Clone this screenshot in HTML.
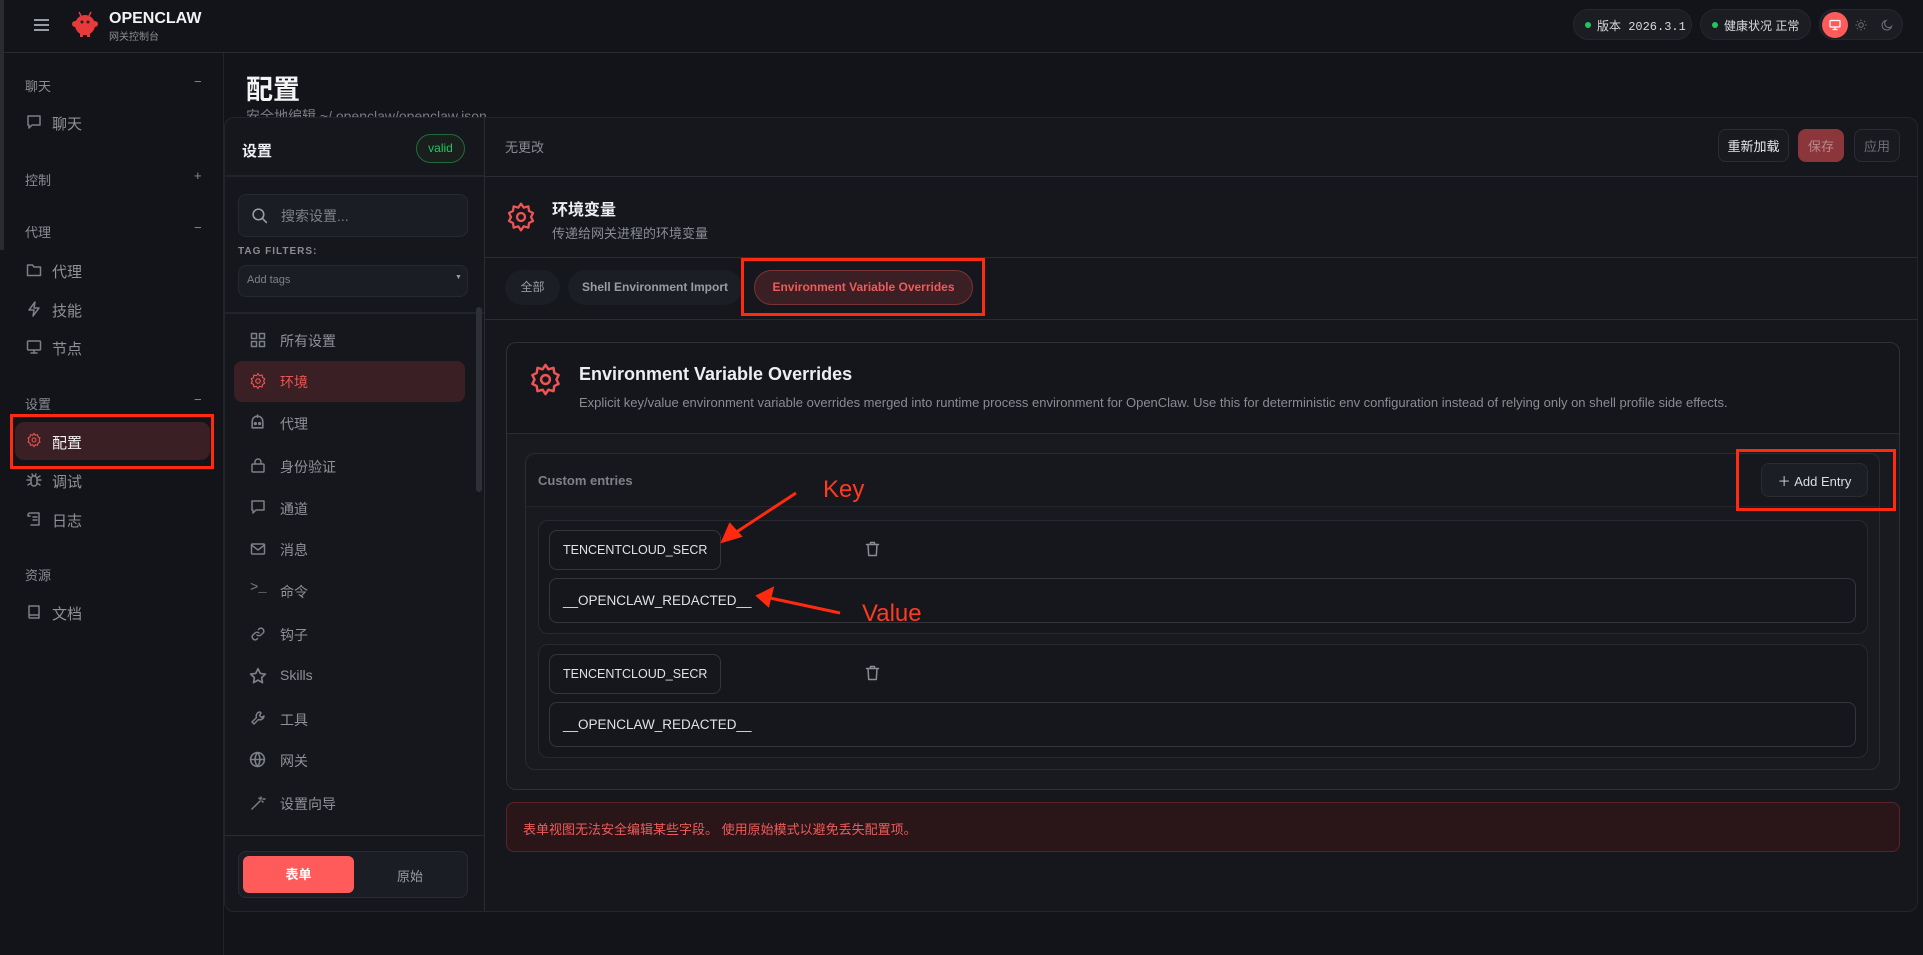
<!DOCTYPE html>
<html><head><meta charset="utf-8"><style>
*{box-sizing:border-box;margin:0;padding:0}
body{width:1923px;height:955px;overflow:hidden;background:#131419;font-family:"Liberation Sans","Noto Sans CJK SC",sans-serif;color:#d8d9de;position:relative}
.a{position:absolute}
.t{position:absolute;white-space:nowrap}
.sb{color:#8a8c94;font-size:13px}
.si{color:#8f9198;font-size:15px}
svg.ic{position:absolute;fill:none;stroke:#7d7f87;stroke-width:1.5;stroke-linecap:round;stroke-linejoin:round}
.pill{position:absolute;background:#1b1d23;border:1px solid #262830;border-radius:16px}
.btn{position:absolute;border:1px solid #2a2c34;border-radius:8px;background:#181a20;font-size:14px;display:flex;align-items:center;justify-content:center}
.inp{position:absolute;border:1px solid #34363e;border-radius:8px;background:#15171c;font-size:14px;color:#e0e1e5;padding-left:13px;display:flex;align-items:center}
.red{position:absolute;border:3px solid #ff2a10}
</style></head><body>
<div class="a" style="left:0;top:0;width:4px;height:250px;background:#2a2b30"></div>
<!-- top bar -->
<div class="a" style="left:0;top:52px;width:1923px;height:1px;background:#2a2b31"></div>
<div class="a" style="left:34px;top:19px;width:15px;height:2px;background:#9a9ca3;box-shadow:0 5px 0 #9a9ca3,0 10px 0 #9a9ca3"></div>
<svg class="a" style="left:70px;top:10px" width="30" height="28" viewBox="0 0 30 28"><circle cx="15" cy="15" r="10" fill="#e83a3a"/><circle cx="5" cy="14" r="3" fill="#e83a3a"/><circle cx="25" cy="14" r="3" fill="#e83a3a"/><rect x="10" y="23" width="3" height="4" fill="#e83a3a"/><rect x="17" y="23" width="3" height="4" fill="#e83a3a"/><line x1="11" y1="6" x2="9" y2="2" stroke="#e83a3a" stroke-width="1.5"/><line x1="19" y1="6" x2="21" y2="2" stroke="#e83a3a" stroke-width="1.5"/><circle cx="12" cy="12" r="1.5" fill="#222"/><circle cx="18" cy="12" r="1.5" fill="#222"/></svg>
<div class="t" style="left:109px;top:10px;font-size:16px;font-weight:bold;color:#f2f2f4">OPENCLAW</div>
<div class="t" style="left:109px;top:28px;font-size:10px;color:#8a8c93">网关控制台</div>
<div class="pill" style="left:1573px;top:9px;width:119px;height:31px"></div>
<div class="a" style="left:1585px;top:22px;width:6px;height:6px;border-radius:50%;background:#22c55e"></div>
<div class="t" style="left:1597px;top:17px;font-size:12px;color:#d8d9de;font-family:'Liberation Mono','Noto Sans CJK SC',monospace">版本 2026.3.1</div>
<div class="pill" style="left:1700px;top:9px;width:111px;height:31px"></div>
<div class="a" style="left:1712px;top:22px;width:6px;height:6px;border-radius:50%;background:#22c55e"></div>
<div class="t" style="left:1724px;top:17px;font-size:12px;color:#d8d9de">健康状况 正常</div>
<div class="pill" style="left:1819px;top:9px;width:84px;height:31px"></div>
<div class="a" style="left:1822px;top:12px;width:26px;height:26px;border-radius:50%;background:#ff5b5b"></div>
<svg class="a" style="left:1829px;top:19px" width="12" height="12" viewBox="0 0 12 12" fill="none" stroke="#fff" stroke-width="1.3"><rect x="1" y="1.5" width="10" height="6.5" rx="1"/><line x1="6" y1="8" x2="6" y2="10.5"/><line x1="3.5" y1="10.5" x2="8.5" y2="10.5"/></svg>
<svg class="a" style="left:1855px;top:19px" width="12" height="12" viewBox="0 0 12 12" fill="none" stroke="#6e7078" stroke-width="1"><circle cx="6" cy="6" r="2.3"/><path d="M6 .5v1.5M6 10v1.5M.5 6H2M10 6h1.5M2 2l1 1M9 9l1 1M2 10l1-1M9 3l1-1"/></svg>
<svg class="a" style="left:1881px;top:19px" width="12" height="12" viewBox="0 0 12 12" fill="none" stroke="#6e7078" stroke-width="1.1"><path d="M10.5 7.5A4.8 4.8 0 1 1 5 1.5a3.8 3.8 0 0 0 5.5 6z"/></svg>

<!-- left sidebar -->
<div class="a" style="left:223px;top:53px;width:1px;height:902px;background:#22242a"></div>
<div class="t sb" style="left:25px;top:76px">聊天</div><div class="t sb" style="left:194px;top:74px">−</div>
<svg class="ic" style="left:26px;top:114px" width="16" height="16" viewBox="0 0 16 16"><path d="M2 2h12v9H6l-3 3v-3H2z"/></svg>
<div class="t si" style="left:52px;top:113px">聊天</div>
<div class="t sb" style="left:25px;top:170px">控制</div><div class="t sb" style="left:194px;top:168px">+</div>
<div class="t sb" style="left:25px;top:222px">代理</div><div class="t sb" style="left:194px;top:220px">−</div>
<svg class="ic" style="left:26px;top:262px" width="16" height="16" viewBox="0 0 16 16"><path d="M1.5 3h5l1.5 2h6.5v8.5h-13z"/></svg>
<div class="t si" style="left:52px;top:261px">代理</div>
<svg class="ic" style="left:26px;top:301px" width="16" height="16" viewBox="0 0 16 16"><path d="M9 1L3 9h5l-1 6 6-8H8z"/></svg>
<div class="t si" style="left:52px;top:300px">技能</div>
<svg class="ic" style="left:26px;top:339px" width="16" height="16" viewBox="0 0 16 16"><rect x="1.5" y="2" width="13" height="9" rx="1"/><path d="M8 11v3M5 14h6"/></svg>
<div class="t si" style="left:52px;top:338px">节点</div>
<div class="t sb" style="left:25px;top:394px">设置</div><div class="t sb" style="left:194px;top:392px">−</div>
<div class="a" style="left:15px;top:422px;width:195px;height:38px;border-radius:9px;background:#3a1f24"></div>
<svg class="ic" style="left:26px;top:432px;stroke:#f05454" width="16" height="16" viewBox="0 0 24 24"><circle cx="12" cy="12" r="3"/><path d="M12 2l2 3 3.5-1 .5 3.5 3 1.5-1.5 3 1.5 3-3 1.5-.5 3.5-3.5-1-2 3-2-3-3.5 1-.5-3.5-3-1.5 1.5-3-1.5-3 3-1.5.5-3.5 3.5 1z"/></svg>
<div class="t" style="left:52px;top:432px;font-size:15px;color:#f0f0f2">配置</div>
<div class="red" style="left:10px;top:414px;width:204px;height:55px"></div>
<svg class="ic" style="left:26px;top:472px" width="16" height="16" viewBox="0 0 16 16"><rect x="5" y="4" width="6" height="10" rx="3"/><path d="M6 2l1 2M10 2l-1 2M1 8h4M11 8h4M2 4l3 2M14 4l-3 2M2 13l3-2M14 13l-3-2"/></svg>
<div class="t si" style="left:52px;top:471px">调试</div>
<svg class="ic" style="left:26px;top:511px" width="16" height="16" viewBox="0 0 16 16"><path d="M4 2h9v12H5M4 2a2 2 0 0 0-2 2v1h2M7 6h4M7 9h4"/></svg>
<div class="t si" style="left:52px;top:510px">日志</div>
<div class="t sb" style="left:25px;top:565px">资源</div>
<svg class="ic" style="left:26px;top:604px" width="16" height="16" viewBox="0 0 16 16"><path d="M3 2h10v12H4a1 1 0 0 1-1-1zM3 11h10"/></svg>
<div class="t si" style="left:52px;top:603px">文档</div>

<!-- main title -->
<div class="t" style="left:246px;top:68px;font-size:27px;font-weight:bold;color:#f4f4f6">配置</div>
<div class="t" style="left:246px;top:106px;font-size:14px;color:#7b7d85">安全地编辑 ~/.openclaw/openclaw.json</div>

<!-- settings panel -->
<div class="a" style="left:224px;top:117px;width:261px;height:795px;background:#15171d;border:1px solid #23252c;border-radius:10px 0 0 10px"></div>
<div class="t" style="left:242px;top:140px;font-size:15px;font-weight:bold;color:#eeeef1">设置</div>
<div class="a" style="left:416px;top:134px;width:49px;height:29px;border:1px solid #1f6b3a;border-radius:15px;background:#1a1f1d;color:#22c55e;font-size:12px;text-align:center;line-height:27px">valid</div>
<div class="a" style="left:225px;top:175px;width:259px;height:2px;background:#22242b"></div>
<div class="a" style="left:238px;top:194px;width:230px;height:43px;background:#1b1d24;border:1px solid #272930;border-radius:8px"></div>
<svg class="ic" style="left:251px;top:207px;stroke:#9a9ca3" width="17" height="17" viewBox="0 0 16 16"><circle cx="7" cy="7" r="5"/><path d="M11 11l3.5 3.5"/></svg>
<div class="t" style="left:281px;top:206px;font-size:14px;color:#7f8189">搜索设置...</div>
<div class="t" style="left:238px;top:246px;font-size:10px;font-weight:bold;letter-spacing:1px;color:#8a8c94">TAG FILTERS:</div>
<div class="a" style="left:238px;top:265px;width:230px;height:32px;background:#1b1d24;border:1px solid #272930;border-radius:8px"></div>
<div class="t" style="left:247px;top:274px;font-size:11px;color:#7f8189">Add tags</div>
<div class="t" style="left:455px;top:274px;font-size:7px;color:#9a9ca3">▼</div>
<div class="a" style="left:225px;top:312px;width:259px;height:2px;background:#22242b"></div>
<div class="a" style="left:476px;top:307px;width:6px;height:185px;border-radius:3px;background:#2e3037"></div>
<div class="a" style="left:234px;top:361px;width:231px;height:41px;border-radius:8px;background:#3a1f24"></div>
<svg class="ic" style="left:250px;top:332px" width="16" height="16" viewBox="0 0 16 16"><rect x="1.5" y="1.5" width="5" height="5"/><rect x="9.5" y="1.5" width="5" height="5"/><rect x="1.5" y="9.5" width="5" height="5"/><rect x="9.5" y="9.5" width="5" height="5"/></svg>
<div class="t si" style="left:280px;top:331px;font-size:14px">所有设置</div>
<svg class="ic" style="left:249px;top:372px;stroke:#f05454" width="18" height="18" viewBox="0 0 24 24"><circle cx="12" cy="12" r="3"/><path d="M12 2l2 3 3.5-1 .5 3.5 3 1.5-1.5 3 1.5 3-3 1.5-.5 3.5-3.5-1-2 3-2-3-3.5 1-.5-3.5-3-1.5 1.5-3-1.5-3 3-1.5.5-3.5 3.5 1z"/></svg>
<div class="t" style="left:280px;top:372px;font-size:14px;color:#f05454">环境</div>
<svg class="ic" style="left:249px;top:414px" width="17" height="17" viewBox="0 0 16 16"><path d="M8 1v2M3 7a5 5 0 0 1 10 0v6H3z"/><circle cx="6" cy="9" r=".8"/><circle cx="10" cy="9" r=".8"/></svg>
<div class="t si" style="left:280px;top:414px;font-size:14px">代理</div>
<svg class="ic" style="left:250px;top:457px" width="16" height="16" viewBox="0 0 16 16"><rect x="2" y="7" width="12" height="8" rx="1"/><path d="M5 7V5a3 3 0 0 1 6 0v2"/></svg>
<div class="t si" style="left:280px;top:457px;font-size:14px">身份验证</div>
<svg class="ic" style="left:250px;top:499px" width="16" height="16" viewBox="0 0 16 16"><path d="M2 2h12v9H6l-3 3v-3H2z"/></svg>
<div class="t si" style="left:280px;top:499px;font-size:14px">通道</div>
<svg class="ic" style="left:250px;top:541px" width="16" height="16" viewBox="0 0 16 16"><rect x="1.5" y="3" width="13" height="10" rx="1"/><path d="M1.5 4l6.5 5 6.5-5"/></svg>
<div class="t si" style="left:280px;top:540px;font-size:14px">消息</div>
<div class="t" style="left:250px;top:580px;font-size:14px;color:#7d7f87;font-family:'Liberation Mono',monospace">&gt;_</div>
<div class="t si" style="left:280px;top:582px;font-size:14px">命令</div>
<svg class="ic" style="left:250px;top:626px" width="16" height="16" viewBox="0 0 16 16"><path d="M7 9a3 3 0 0 0 4 0l2.5-2.5a3 3 0 0 0-4-4L8.5 3.5M9 7a3 3 0 0 0-4 0L2.5 9.5a3 3 0 0 0 4 4l1-1"/></svg>
<div class="t si" style="left:280px;top:625px;font-size:14px">钩子</div>
<svg class="ic" style="left:249px;top:667px" width="18" height="18" viewBox="0 0 16 16"><path d="M8 1.5l2 4.2 4.5.6-3.3 3.1.8 4.5L8 11.7 4 13.9l.8-4.5L1.5 6.3 6 5.7z"/></svg>
<div class="t si" style="left:280px;top:667px;font-size:14px">Skills</div>
<svg class="ic" style="left:250px;top:710px" width="16" height="16" viewBox="0 0 16 16"><path d="M10 2a4 4 0 0 0-3.5 5.5L2 12l2 2 4.5-4.5A4 4 0 0 0 14 6l-2.5 1.5-2-2L11 3z"/></svg>
<div class="t si" style="left:280px;top:710px;font-size:14px">工具</div>
<svg class="ic" style="left:249px;top:751px" width="17" height="17" viewBox="0 0 16 16"><circle cx="8" cy="8" r="6.5"/><path d="M1.5 8h13M8 1.5c-3 3.5-3 9.5 0 13M8 1.5c3 3.5 3 9.5 0 13"/></svg>
<div class="t si" style="left:280px;top:751px;font-size:14px">网关</div>
<svg class="ic" style="left:250px;top:795px" width="16" height="16" viewBox="0 0 16 16"><path d="M2 14l8-8M11 2v2M13 4h2M12 6l1 1M9 3l1 1"/></svg>
<div class="t si" style="left:280px;top:794px;font-size:14px">设置向导</div>
<div class="a" style="left:225px;top:835px;width:259px;height:1px;background:#2a2c33"></div>
<div class="a" style="left:238px;top:851px;width:230px;height:47px;border:1px solid #292b32;border-radius:8px;background:#1b1d24"></div>
<div class="a" style="left:243px;top:856px;width:111px;height:37px;border-radius:6px;background:#ff5b5b;color:#fff;font-size:13px;font-weight:bold;text-align:center;line-height:37px">表单</div>
<div class="t" style="left:397px;top:866px;font-size:13px;color:#9a9ca3">原始</div>

<!-- main panel -->
<div class="a" style="left:484px;top:117px;width:1434px;height:795px;background:#15171d;border:1px solid #23252c;border-left:1px solid #2a2c33;border-radius:0 10px 10px 0"></div>
<div class="t" style="left:505px;top:137px;font-size:13px;color:#8a8c94">无更改</div>
<div class="btn" style="left:1718px;top:129px;width:71px;height:33px;color:#e8e8eb;font-size:13px">重新加载</div>
<div class="btn" style="left:1798px;top:129px;width:46px;height:33px;background:#8b363b;border-color:#8b363b;color:#b98a8d;font-size:13px">保存</div>
<div class="btn" style="left:1854px;top:129px;width:46px;height:33px;color:#6e7078;font-size:13px">应用</div>
<div class="a" style="left:485px;top:176px;width:1432px;height:1px;background:#2a2c33"></div>
<svg class="ic" style="left:505px;top:201px;stroke:#f05454;stroke-width:1.7" width="32" height="32" viewBox="0 0 24 24"><circle cx="12" cy="12" r="3"/><path d="M12 2l2 3 3.5-1 .5 3.5 3 1.5-1.5 3 1.5 3-3 1.5-.5 3.5-3.5-1-2 3-2-3-3.5 1-.5-3.5-3-1.5 1.5-3-1.5-3 3-1.5.5-3.5 3.5 1z"/></svg>
<div class="t" style="left:552px;top:196px;font-size:16px;font-weight:bold;color:#eeeef1">环境变量</div>
<div class="t" style="left:552px;top:223px;font-size:13px;color:#8a8c94">传递给网关进程的环境变量</div>
<div class="a" style="left:485px;top:257px;width:1432px;height:1px;background:#2a2c33"></div>
<div class="a" style="left:505px;top:270px;width:55px;height:35px;border-radius:18px;background:#1c1e25;color:#9a9ca3;font-size:12px;text-align:center;line-height:35px">全部</div>
<div class="a" style="left:568px;top:270px;width:174px;height:35px;border-radius:18px;background:#1c1e25;color:#9a9ca3;font-size:12px;font-weight:bold;text-align:center;line-height:35px">Shell Environment Import</div>
<div class="a" style="left:754px;top:270px;width:219px;height:35px;border-radius:18px;background:#3a1f24;border:1px solid #7a3338;color:#f05a5a;font-size:12px;font-weight:bold;text-align:center;line-height:33px">Environment Variable Overrides</div>
<div class="red" style="left:741px;top:258px;width:244px;height:58px"></div>
<div class="a" style="left:485px;top:319px;width:1432px;height:1px;background:#2a2c33"></div>

<div class="a" style="left:506px;top:342px;width:1394px;height:448px;border:1px solid #2e3038;border-radius:10px;background:#14161b"></div>
<svg class="ic" style="left:528px;top:362px;stroke:#f05454;stroke-width:1.7" width="35" height="35" viewBox="0 0 24 24"><circle cx="12" cy="12" r="3"/><path d="M12 2l2 3 3.5-1 .5 3.5 3 1.5-1.5 3 1.5 3-3 1.5-.5 3.5-3.5-1-2 3-2-3-3.5 1-.5-3.5-3-1.5 1.5-3-1.5-3 3-1.5.5-3.5 3.5 1z"/></svg>
<div class="t" style="left:579px;top:364px;font-size:18px;font-weight:bold;color:#eeeef1">Environment Variable Overrides</div>
<div class="t" style="left:579px;top:395px;font-size:13px;color:#8a8c94">Explicit key/value environment variable overrides merged into runtime process environment for OpenClaw. Use this for deterministic env configuration instead of relying only on shell profile side effects.</div>
<div class="a" style="left:507px;top:433px;width:1392px;height:1px;background:#2a2c33"></div>
<div class="a" style="left:507px;top:434px;width:1392px;height:355px;background:#181a20;border-radius:0 0 10px 10px"></div>
<div class="a" style="left:525px;top:453px;width:1355px;height:317px;border:1px solid #2a2c33;border-radius:10px;background:#16181d"></div>
<div class="t" style="left:538px;top:473px;font-size:13px;font-weight:bold;color:#7f8189">Custom entries</div>
<div class="a" style="left:526px;top:506px;width:1353px;height:1px;background:#23252c"></div>
<div class="a" style="left:526px;top:507px;width:1353px;height:262px;background:#181a20;border-radius:0 0 10px 10px"></div>
<div class="btn" style="left:1761px;top:463px;width:107px;height:34px;background:#1c1e25;color:#dcdde1;font-size:13px">＋&nbsp;Add Entry</div>
<div class="red" style="left:1736px;top:449px;width:160px;height:62px"></div>

<div class="a" style="left:538px;top:520px;width:1330px;height:114px;border:1px solid #272930;border-radius:10px;background:#15171c"></div>
<div class="inp" style="left:549px;top:530px;width:172px;height:40px;font-size:12.5px">TENCENTCLOUD_SECR</div>
<svg class="ic" style="left:865px;top:541px;stroke:#8a8c94" width="15" height="16" viewBox="0 0 15 16"><path d="M1.5 3.5h12M5.5 3.5V1.5h4v2M3 3.5l.7 11h7.6l.7-11"/></svg>
<div class="inp" style="left:549px;top:578px;width:1307px;height:45px;font-size:13.5px">__OPENCLAW_REDACTED__</div>

<div class="a" style="left:538px;top:644px;width:1330px;height:114px;border:1px solid #272930;border-radius:10px;background:#15171c"></div>
<div class="inp" style="left:549px;top:654px;width:172px;height:40px;font-size:12.5px">TENCENTCLOUD_SECR</div>
<svg class="ic" style="left:865px;top:665px;stroke:#8a8c94" width="15" height="16" viewBox="0 0 15 16"><path d="M1.5 3.5h12M5.5 3.5V1.5h4v2M3 3.5l.7 11h7.6l.7-11"/></svg>
<div class="inp" style="left:549px;top:702px;width:1307px;height:45px;font-size:13.5px">__OPENCLAW_REDACTED__</div>

<div class="a" style="left:506px;top:802px;width:1394px;height:50px;border:1px solid #5a2328;border-radius:8px;background:#2a1619"></div>
<div class="t" style="left:523px;top:819px;font-size:13px;color:#f05a5a">表单视图无法安全编辑某些字段。 使用原始模式以避免丢失配置项。</div>

<!-- annotations -->
<div class="t" style="left:823px;top:476px;font-size:24px;color:#ff3a22">Key</div>
<div class="t" style="left:862px;top:600px;font-size:24px;color:#ff3a22">Value</div>
<svg class="a" style="left:700px;top:480px" width="200" height="150" viewBox="700 480 200 150"><g stroke="#ff2a10" stroke-width="3" fill="#ff2a10"><line x1="796" y1="493" x2="735" y2="533"/><polygon points="723,541 730,525 740,536" /><line x1="840" y1="613" x2="770" y2="598"/><polygon points="758,596 772,589 768,605"/></g></svg>
</body></html>
